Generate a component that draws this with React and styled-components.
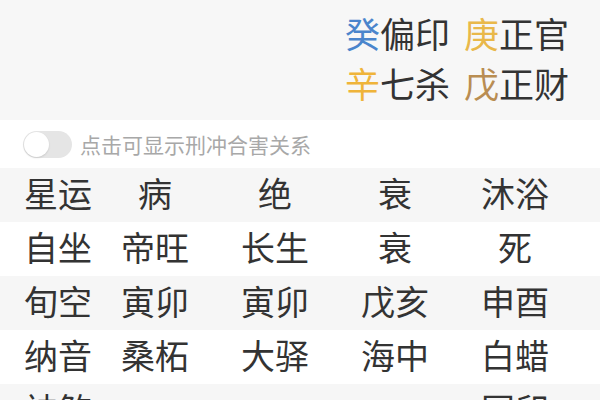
import styled, { createGlobalStyle } from "styled-components";

const GlobalStyle = createGlobalStyle`
  html, body {
    margin: 0;
    padding: 0;
    background: #ffffff;
  }
  body {
    font-family: "Noto Sans CJK SC", "Noto Sans", sans-serif;
    color: #333333;
    overflow: hidden;
  }
`;

const tenGods = [
  [
    { stem: "癸", color: "#4a85cc", god: "偏印" },
    { stem: "庚", color: "#e9b84a", god: "正官" },
  ],
  [
    { stem: "辛", color: "#efb43a", god: "七杀" },
    { stem: "戊", color: "#b98d52", god: "正财" },
  ],
];

const rows = [
  ["星运", "病", "绝", "衰", "沐浴"],
  ["自坐", "帝旺", "长生", "衰", "死"],
  ["旬空", "寅卯", "寅卯", "戊亥", "申酉"],
  ["纳音", "桑柘", "大驿", "海中", "白蜡"],
  ["神煞", "", "", "", "国印"],
];

function App() {
  return (
    <>
      <GlobalStyle />
      <Page>
        <TopPanel>
          {tenGods.map((line, i) => (
            <GodLine key={i}>
              {line.map((g) => (
                <GodItem key={g.stem}>
                  <Stem $color={g.color}>{g.stem}</Stem>
                  {g.god}
                </GodItem>
              ))}
            </GodLine>
          ))}
        </TopPanel>

        <ToggleRow>
          <Switch>
            <Knob />
          </Switch>
          <ToggleLabel>点击可显示刑冲合害关系</ToggleLabel>
        </ToggleRow>

        {rows.map((row, i) => (
          <Row key={row[0]} $striped={i % 2 === 0}>
            {row.map((cell, j) =>
              j === 0 ? (
                <Label key={j}>{cell}</Label>
              ) : (
                <Cell key={j}>{cell}</Cell>
              )
            )}
          </Row>
        ))}
      </Page>
    </>
  );
}
export default App;

const Page = styled.div`
  width: 600px;
  height: 400px;
  overflow: hidden;
  display: flex;
  flex-direction: column;
`;

const TopPanel = styled.div`
  flex: none;
  height: 120px;
  box-sizing: border-box;
  padding: 8px 31px 0 0;
  background: #f7f7f7;
  display: flex;
  flex-direction: column;
  align-items: flex-end;
`;

const GodLine = styled.div`
  display: flex;
  gap: 14px;
  font-size: 35px;
  line-height: 50px;
  color: #333333;
`;

const GodItem = styled.span`
  white-space: nowrap;
`;

const Stem = styled.span`
  color: ${(p) => p.$color};
`;

const ToggleRow = styled.div`
  flex: none;
  height: 48px;
  display: flex;
  align-items: center;
  padding-left: 23px;
  gap: 8px;
  background: #ffffff;
`;

const Switch = styled.div`
  position: relative;
  width: 49px;
  height: 27px;
  border-radius: 14px;
  background: #e5e5e5;
`;

const Knob = styled.div`
  position: absolute;
  left: 1px;
  top: 1px;
  width: 25px;
  height: 25px;
  border-radius: 50%;
  background: #ffffff;
  box-shadow: 0 1px 2px rgba(0, 0, 0, 0.12);
`;

const ToggleLabel = styled.span`
  font-size: 21px;
  color: #a8a8a8;
`;

const Row = styled.div`
  flex: none;
  height: 54px;
  box-sizing: border-box;
  padding-bottom: 5px;
  display: grid;
  grid-template-columns: 95px repeat(4, 120px);
  align-items: center;
  background: ${(p) => (p.$striped ? "#f6f6f6" : "#ffffff")};
  font-size: 34px;
  line-height: 40px;
  color: #333333;
`;

const Label = styled.div`
  padding-left: 24px;
  white-space: nowrap;
`;

const Cell = styled.div`
  text-align: center;
  white-space: nowrap;
`;
